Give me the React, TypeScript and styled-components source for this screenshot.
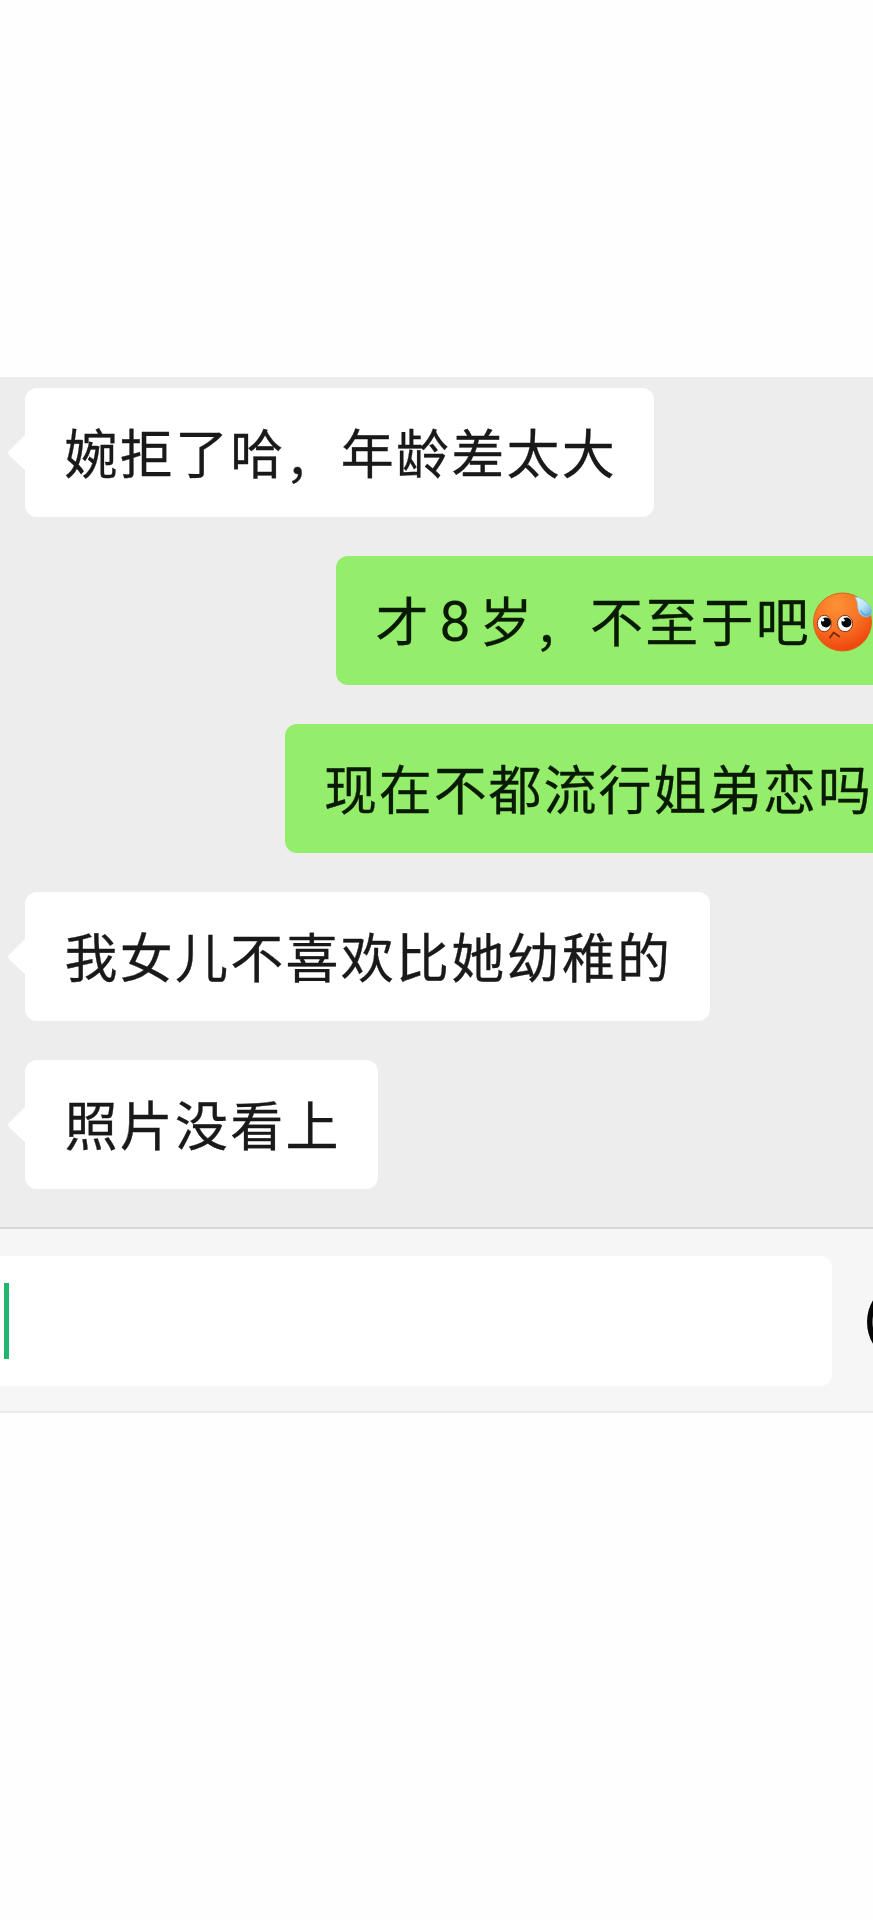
import React from "react";
import styled, { createGlobalStyle } from "styled-components";

const GlobalStyle = createGlobalStyle`
  body { margin: 0; background: #fff; }
`;

const Page = styled.main`
  box-sizing: border-box;
  width: 873px;
  height: 1920px;
  padding-top: 377px;
  overflow: hidden;
  background: #fefefe;
  font-family: "Noto Sans CJK SC", sans-serif;
`;

const Messages = styled.section`
  box-sizing: border-box;
  display: flex;
  flex-direction: column;
  gap: 38.5px;
  height: 850px;
  padding: 10.5px 0 0 25.4px;
  background: #ededed;
`;

const Bubble = styled.div<{ $sent?: boolean; $width?: number; $offset?: number; $spacing?: number }>`
  position: relative;
  box-sizing: border-box;
  display: flex;
  align-items: center;
  flex: none;
  height: 129.5px;
  width: ${(p) => (p.$width ? `${p.$width}px` : "auto")};
  margin-left: ${(p) => p.$offset ?? 0}px;
  padding-left: 39px;
  border-radius: ${(p) => (p.$sent ? "12px 0 0 12px" : "12px")};
  background: ${(p) => (p.$sent ? "#95ee6b" : "#fff")};
  color: ${(p) => (p.$sent ? "#081a02" : "#191919")};
  font-size: 53px;
  line-height: 78px;
  letter-spacing: ${(p) => p.$spacing ?? 2.25}px;
  white-space: nowrap;
  -webkit-text-stroke: 0.3px currentColor;
`;

const Words = styled.span`
  padding-bottom: 3px;
`;

const Comma = styled.span`
  display: inline-block;
  width: 55.25px;
  font-size: 49px;
  line-height: 0;
  letter-spacing: 0;
  vertical-align: -4px;
`;

const Tail = styled.svg`
  position: absolute;
  left: -17px;
  top: 46px;
  width: 18px;
  height: 38px;
`;

const Digit = styled.span`
  width: 51px;
  padding-top: 4px;
  font-family: Roboto, sans-serif;
  font-size: 56px;
  text-align: center;
  letter-spacing: 0;
  -webkit-text-stroke: 0;
`;

const Emoji = styled.svg`
  flex: none;
  width: 60px;
  height: 60px;
  margin: 4px 0 0 2px;
`;

const InputBar = styled.footer`
  box-sizing: border-box;
  display: flex;
  align-items: center;
  height: 186px;
  border-top: 2px solid #d8d8d8;
  border-bottom: 2px solid #ebebeb;
  background: #f6f6f6;
  overflow: hidden;
`;

const Field = styled.div`
  display: flex;
  align-items: center;
  flex: none;
  width: 832px;
  height: 130px;
  margin-top: 1px;
  border-radius: 0 12px 12px 0;
  background: #fff;
`;

const Caret = styled.span`
  width: 5px;
  height: 76px;
  margin-left: 4px;
  background: #1fb670;
`;

const FaceButton = styled.svg`
  flex: none;
  width: 84px;
  height: 84px;
  margin: 3px 0 0 34.5px;
`;

const BubbleTail = () => (
  <Tail viewBox="0 0 18 38">
    <path d="M18 0 1.4 16.5Q-1 19 1.4 21.5L18 37Z" fill="#fff" />
  </Tail>
);

const AwkwardFace = () => (
  <Emoji viewBox="0 0 60 60">
    <defs>
      <radialGradient id="skin" cx="0.4" cy="0.2" r="0.85">
        <stop offset="0" stopColor="#fb9234" />
        <stop offset="0.5" stopColor="#f87325" />
        <stop offset="1" stopColor="#ee3f08" />
      </radialGradient>
      <linearGradient id="sweat" x1="0" y1="0" x2="0.8" y2="1">
        <stop offset="0" stopColor="#e8faff" />
        <stop offset="0.55" stopColor="#b5e0f3" />
        <stop offset="1" stopColor="#62acd9" />
      </linearGradient>
    </defs>
    <circle cx="29.5" cy="30" r="29" fill="url(#skin)" stroke="#dc651c" strokeWidth="1" />
    <ellipse cx="11.3" cy="31.5" rx="7" ry="8.2" fill="#fff" stroke="#8b3514" strokeWidth="1" />
    <ellipse cx="32" cy="31.5" rx="7.6" ry="8.2" fill="#fff" stroke="#8b3514" strokeWidth="1" />
    <circle cx="13" cy="30.5" r="5" fill="#080808" />
    <circle cx="33.5" cy="30.5" r="5" fill="#080808" />
    <circle cx="9.8" cy="28.2" r="1.4" fill="#fff" />
    <circle cx="30.3" cy="28.2" r="1.4" fill="#fff" />
    <path d="M17 45.5 20.7 40.5 26.3 44.5" fill="none" stroke="#7c260b" strokeWidth="1.8" strokeLinecap="round" strokeLinejoin="round" />
    <path d="M42 5C48 5 57 11 58.5 18C60 25 52 27 47.5 22.5C43 17 46 11 42 5Z" fill="url(#sweat)" stroke="#8ac0d8" strokeWidth="0.8" />
    <path d="M48 19Q51 25 56 22" fill="none" stroke="#5ba9db" strokeWidth="1.5" strokeLinecap="round" />
  </Emoji>
);

export default function App() {
  return (
    <>
      <GlobalStyle />
      <Page>
        <Messages>
          <Bubble $width={628.5}><BubbleTail /><Words>婉拒了哈<Comma>，</Comma>年龄差太大</Words></Bubble>
          <Bubble $sent $offset={311}>
            <Words>才</Words><Digit>8</Digit><Words>岁<Comma>，</Comma>不至于吧</Words><AwkwardFace />
          </Bubble>
          <Bubble $sent $offset={259.5} $spacing={1.9}><Words>现在不都流行姐弟恋吗</Words></Bubble>
          <Bubble $width={684.5}><BubbleTail /><Words>我女儿不喜欢比她幼稚的</Words></Bubble>
          <Bubble $width={352.5}><BubbleTail /><Words>照片没看上</Words></Bubble>
        </Messages>
        <InputBar>
          <Field><Caret /></Field>
          <FaceButton viewBox="0 0 84 84">
            <circle cx="42" cy="42" r="39.2" fill="none" stroke="#050505" strokeWidth="5.5" />
          </FaceButton>
        </InputBar>
      </Page>
    </>
  );
}
